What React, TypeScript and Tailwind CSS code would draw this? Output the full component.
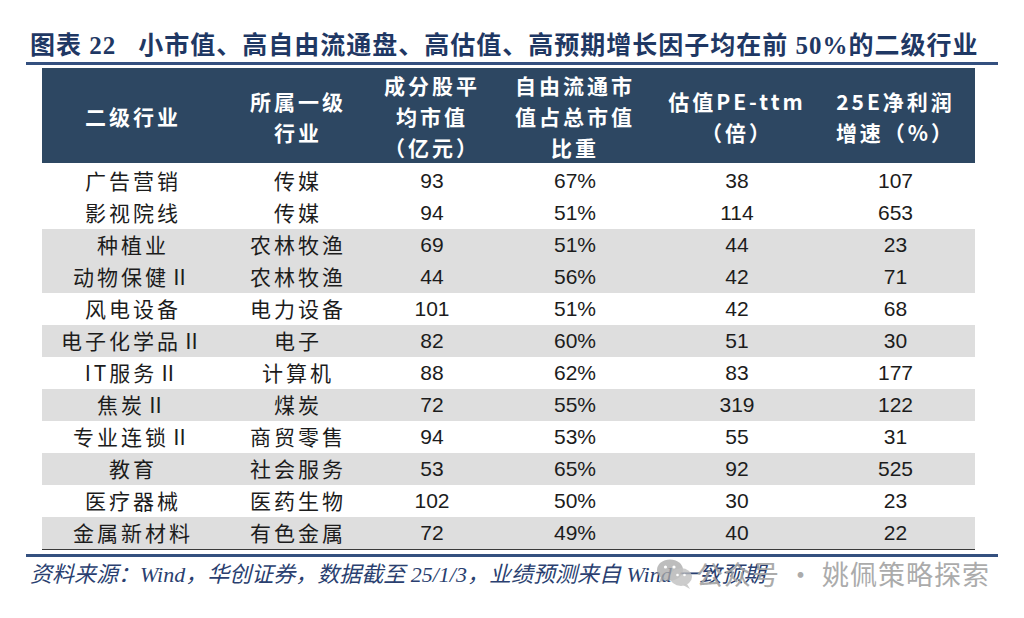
const COLS = ["w-[182px]", "w-[148px]", "w-[120px]", "w-[166px]", "w-[158px]", "w-[159px]"];

const HEAD = [
  ["二级行业"],
  ["所属一级", "行业"],
  ["成分股平", "均市值", "（亿元）"],
  ["自由流通市", "值占总市值", "比重"],
  ["估值PE-ttm", "（倍）"],
  ["25E净利润", "增速（%）"],
];

const ROWS: [string, string, string, string, string, string, boolean][] = [
  ["广告营销", "传媒", "93", "67%", "38", "107", false],
  ["影视院线", "传媒", "94", "51%", "114", "653", false],
  ["种植业", "农林牧渔", "69", "51%", "44", "23", true],
  ["动物保健Ⅱ", "农林牧渔", "44", "56%", "42", "71", true],
  ["风电设备", "电力设备", "101", "51%", "42", "68", false],
  ["电子化学品Ⅱ", "电子", "82", "60%", "51", "30", true],
  ["IT服务Ⅱ", "计算机", "88", "62%", "83", "177", false],
  ["焦炭Ⅱ", "煤炭", "72", "55%", "319", "122", true],
  ["专业连锁Ⅱ", "商贸零售", "94", "53%", "55", "31", false],
  ["教育", "社会服务", "53", "65%", "92", "525", true],
  ["医疗器械", "医药生物", "102", "50%", "30", "23", false],
  ["金属新材料", "有色金属", "72", "49%", "40", "22", true],
];

const CJK = "font-['Noto_Sans_CJK_SC',sans-serif]";
const NUM = "font-['Liberation_Sans','Noto_Sans_CJK_SC',sans-serif]";

function WeChatIcon() {
  return (
    <svg width="38" height="32" viewBox="0 0 38 32" aria-hidden="true">
      <ellipse cx="14" cy="12" rx="13" ry="10.5" fill="#a9a9a9" fillOpacity="0.85" />
      <path d="M5 19 L3 25 L10 21 Z" fill="#a9a9a9" fillOpacity="0.85" />
      <ellipse cx="25" cy="19" rx="11" ry="9" fill="#bdbdbd" fillOpacity="0.85" />
      <path d="M31 26 L34 31 L27 27 Z" fill="#bdbdbd" fillOpacity="0.85" />
      <circle cx="9.5" cy="9" r="1.6" fill="#fff" />
      <circle cx="18" cy="9" r="1.6" fill="#fff" />
      <circle cx="21.5" cy="17" r="1.3" fill="#fff" />
      <circle cx="28.5" cy="17" r="1.3" fill="#fff" />
    </svg>
  );
}

export default function App() {
  return (
    <div className="relative h-[618px] w-[1024px] overflow-hidden bg-white px-[26px] pt-[32px]">
      <div className="flex h-[28px] items-center pl-[4px] font-['Liberation_Serif','Noto_Sans_CJK_SC',serif] text-[25px] font-bold leading-[28px] text-[#1f3864]">
        <span className="tracking-[1px]">图表 22</span>
        <span className="ml-[22px] tracking-[1px]">小市值、高自由流通盘、高估值、高预期增长因子均在前 50%的二级行业</span>
      </div>
      <div className="mt-[2px] h-[3px] w-[972px] bg-[#34507f]" />

      <div className="ml-[16px] mt-[3px] w-[933px]">
        <div className={`flex h-[95px] items-center bg-[#2d4762] pt-[2px] text-center text-[21px] font-bold leading-[31px] text-white ${CJK}`}>
          {HEAD.map((lines, i) => (
            <div key={i} className={`${COLS[i]} flex flex-col items-center tracking-[3px]`}>
              {lines.map((l) => (
                <span key={l}>{l}</span>
              ))}
            </div>
          ))}
        </div>

        <div className="mt-[2px] border-b border-[#3a3a3a]">
          {ROWS.map((r) => (
            <div
              key={r[0]}
              className={`flex h-[32px] items-center text-center text-[21px] text-[#1c1c1c] ${r[6] ? "bg-[#dedede]" : "bg-white"}`}
            >
              <div className={`${COLS[0]} ${CJK} tracking-[3px]`}>{r[0]}</div>
              <div className={`${COLS[1]} ${CJK} tracking-[3px]`}>{r[1]}</div>
              <div className={`${COLS[2]} ${NUM}`}>{r[2]}</div>
              <div className={`${COLS[3]} ${NUM}`}>{r[3]}</div>
              <div className={`${COLS[4]} ${NUM}`}>{r[4]}</div>
              <div className={`${COLS[5]} ${NUM}`}>{r[5]}</div>
            </div>
          ))}
        </div>
      </div>

      <div className="mt-[4px] h-[3px] w-[972px] bg-[#34507f]" />

      <div className="relative mt-[5px] h-[26px]">
        <p className="pl-[4px] font-['Liberation_Serif','Noto_Sans_CJK_SC',serif] text-[22px] italic leading-[26px] text-[#2a3f70]">
          资料来源：Wind，华创证券，数据截至 25/1/3，业绩预测来自 Wind 一致预期
        </p>
        <div className="absolute left-[630px] top-[-5px] flex items-center gap-[2px] opacity-90">
          <WeChatIcon />
          <span className="font-['Noto_Sans_CJK_SC',sans-serif] text-[27px] leading-[34px] tracking-[1px] text-[#a3a3a3]">
            公众号 · 姚佩策略探索
          </span>
        </div>
      </div>
    </div>
  );
}
